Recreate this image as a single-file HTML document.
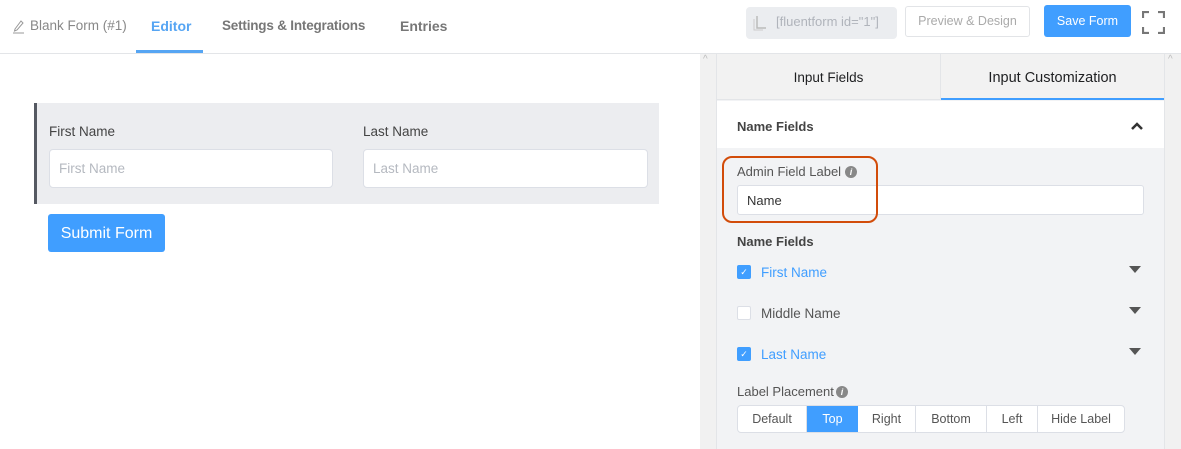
<!DOCTYPE html>
<html><head><meta charset="utf-8"><style>
*{box-sizing:border-box;margin:0;padding:0}
body{width:1181px;height:449px;overflow:hidden;background:#fff;font-family:"Liberation Sans",sans-serif;position:relative;color:#1e1f21}
.a{position:absolute;white-space:nowrap}
</style></head><body>
<div class="a" style="left:0;top:53px;width:1181px;height:1px;background:#e3e5e8"></div>
<svg class="a" style="left:12px;top:18px" width="14" height="16" viewBox="0 0 14 16"><path d="M3 11 L9 3 L11 5 L5 12 L2.5 13 Z" fill="none" stroke="#999" stroke-width="1"/><path d="M1 15 H12" stroke="#999"/></svg>
<div class="a" style="left:30px;top:18px;font-size:13.5px;color:#888">Blank Form (#1)</div>
<div class="a" style="left:151px;top:18px;font-size:14px;font-weight:bold;color:#56a5f3">Editor</div>
<div class="a" style="left:136px;top:50px;width:67px;height:3px;background:#56a5f3"></div>
<div class="a" style="left:222px;top:18px;font-size:13.5px;font-weight:bold;color:#777;letter-spacing:-0.2px">Settings &amp; Integrations</div>
<div class="a" style="left:400px;top:18px;font-size:14px;font-weight:bold;color:#777">Entries</div>
<div class="a" style="left:746px;top:7px;width:151px;height:32px;background:#ebedf0;border-radius:4px"></div>
<svg class="a" style="left:752px;top:14px" width="16" height="18"><path d="M5 2 V14 H14" fill="none" stroke="#bbb" stroke-width="1.5"/><path d="M2 5 V16 H11" fill="none" stroke="#ccc" stroke-width="1"/></svg>
<div class="a" style="left:776px;top:14px;font-size:13px;color:#b0b4bb">[fluentform id="1"]</div>
<div class="a" style="left:905px;top:6px;width:125px;height:31px;border:1px solid #e2e4e7;border-radius:3px;font-size:12.5px;color:#aaa;text-align:center;line-height:29px">Preview &amp; Design</div>
<div class="a" style="left:1044px;top:5px;width:87px;height:32px;background:#409eff;border-radius:3px;font-size:12.5px;color:#fff;text-align:center;line-height:32px">Save Form</div>
<svg class="a" style="left:1142px;top:11px" width="23" height="23" viewBox="0 0 23 23"><path d="M1 7 V1 H7 M16 1 H22 V7 M22 16 V22 H16 M7 22 H1 V16" fill="none" stroke="#777" stroke-width="2.2"/></svg>

<div class="a" style="left:34px;top:103px;width:625px;height:101px;background:#ecedf0;border-left:3px solid #555962"></div>
<div class="a" style="left:49px;top:124px;font-size:13.5px;color:#444">First Name</div>
<div class="a" style="left:363px;top:124px;font-size:13.5px;color:#444">Last Name</div>
<div class="a" style="left:49px;top:149px;width:284px;height:39px;background:#fff;border:1px solid #dcdfe6;border-radius:4px;padding-left:9px;line-height:38px;font-size:13.5px;color:#b5b9c0">First Name</div>
<div class="a" style="left:363px;top:149px;width:285px;height:39px;background:#fff;border:1px solid #dcdfe6;border-radius:4px;padding-left:9px;line-height:38px;font-size:13.5px;color:#b5b9c0">Last Name</div>
<div class="a" style="left:48px;top:214px;width:117px;height:38px;background:#409eff;border-radius:3px;color:#fff;font-size:16px;text-align:center;line-height:40px">Submit Form</div>

<div class="a" style="left:700px;top:54px;width:17px;height:395px;background:#f1f1f1;border-right:1px solid #e3e5e8"></div>
<div class="a" style="left:1164px;top:54px;width:17px;height:395px;background:#f1f1f1;border-left:1px solid #e3e5e8"></div>
<div class="a" style="left:703px;top:54px;font-size:10px;color:#bbb">^</div>
<div class="a" style="left:1168px;top:54px;font-size:10px;color:#bbb">^</div>
<div class="a" style="left:717px;top:54px;width:447px;height:395px;background:#f2f3f5"></div>
<div class="a" style="left:717px;top:54px;width:224px;height:46px;background:#f2f2f2;border-right:1px solid #e3e5e8;border-bottom:1px solid #e3e5e8;text-align:center;line-height:48px;font-size:13.5px">Input Fields</div>
<div class="a" style="left:941px;top:54px;width:223px;height:46px;background:#f2f2f2;border-bottom:2px solid #409eff;text-align:center;line-height:48px;font-size:14.5px">Input Customization</div>
<div class="a" style="left:717px;top:101px;width:447px;height:47px;background:#fff"></div>
<div class="a" style="left:737px;top:119px;font-size:13px;font-weight:bold;color:#444">Name Fields</div>
<svg class="a" style="left:1130px;top:121px" width="14" height="10"><path d="M2 8 L7 3 L12 8" fill="none" stroke="#333" stroke-width="2.5"/></svg>
<div class="a" style="left:737px;top:164px;font-size:13px;color:#555">Admin Field Label</div>
<div class="a" style="left:845px;top:166px;width:12px;height:12px;border-radius:50%;background:#888;color:#fff;font-size:9px;font-style:italic;text-align:center;line-height:12px;font-weight:bold">i</div>
<div class="a" style="left:737px;top:185px;width:407px;height:30px;background:#fff;border:1px solid #dcdfe6;border-radius:3px;padding-left:9px;line-height:30px;font-size:13px;color:#333">Name</div>
<div class="a" style="left:722px;top:156px;width:156px;height:67px;border:2px solid #d24c0a;border-radius:10px"></div>
<div class="a" style="left:737px;top:234px;font-size:13px;font-weight:bold;color:#444">Name Fields</div>

<div class="a" style="left:737px;top:265px;width:14px;height:14px;background:#409eff;border-radius:2px;color:#fff;font-size:9px;text-align:center;line-height:14px">✓</div>
<div class="a" style="left:761px;top:265px;font-size:13.5px;color:#409eff">First Name</div>
<div class="a" style="left:737px;top:306px;width:14px;height:14px;background:#fff;border:1px solid #dcdfe6;border-radius:2px"></div>
<div class="a" style="left:761px;top:306px;font-size:13.5px;color:#555">Middle Name</div>
<div class="a" style="left:737px;top:347px;width:14px;height:14px;background:#409eff;border-radius:2px;color:#fff;font-size:9px;text-align:center;line-height:14px">✓</div>
<div class="a" style="left:761px;top:347px;font-size:13.5px;color:#409eff">Last Name</div>
<svg class="a" style="left:1129px;top:266px" width="12" height="8"><path d="M0 0 H12 L6 7Z" fill="#555"/></svg>
<svg class="a" style="left:1129px;top:307px" width="12" height="8"><path d="M0 0 H12 L6 7Z" fill="#555"/></svg>
<svg class="a" style="left:1129px;top:348px" width="12" height="8"><path d="M0 0 H12 L6 7Z" fill="#555"/></svg>

<div class="a" style="left:737px;top:384px;font-size:13px;color:#555">Label Placement</div>
<div class="a" style="left:836px;top:386px;width:12px;height:12px;border-radius:50%;background:#888;color:#fff;font-size:9px;font-style:italic;text-align:center;line-height:12px;font-weight:bold">i</div>
<div class="a" style="left:737px;top:405px;width:388px;height:28px;background:#fff;border:1px solid #dcdfe6;border-radius:4px;display:flex;font-size:12.5px;color:#555;line-height:27px;overflow:hidden">
<div style="width:69px;text-align:center;border-right:1px solid #dcdfe6">Default</div>
<div style="width:51px;text-align:center;background:#409eff;color:#fff">Top</div>
<div style="width:58px;text-align:center;border-right:1px solid #dcdfe6">Right</div>
<div style="width:71px;text-align:center;border-right:1px solid #dcdfe6">Bottom</div>
<div style="width:51px;text-align:center;border-right:1px solid #dcdfe6">Left</div>
<div style="flex:1;text-align:center">Hide Label</div>
</div>
</body></html>
